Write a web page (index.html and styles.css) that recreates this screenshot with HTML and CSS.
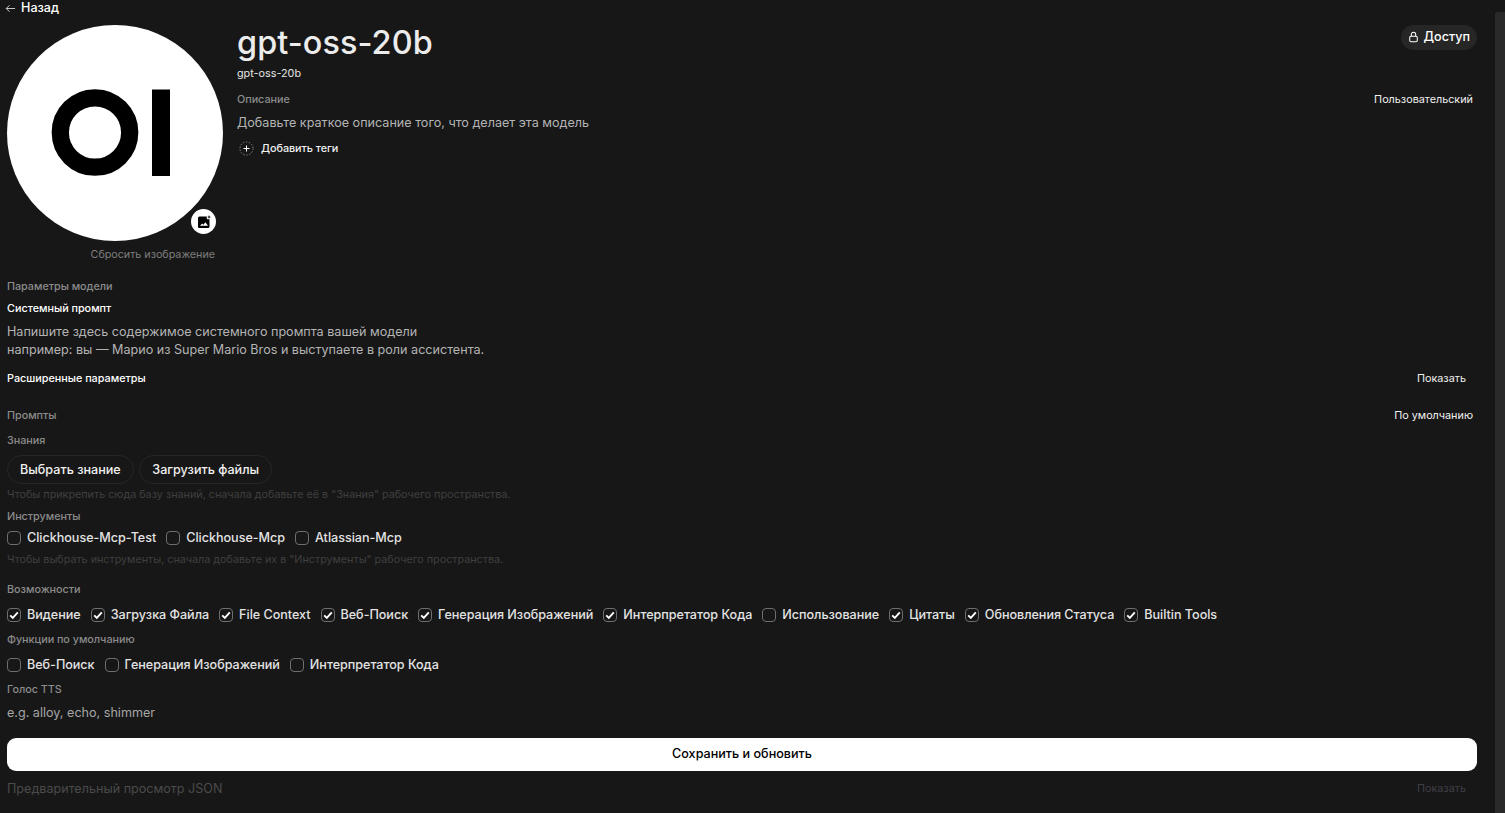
FILE: index.html
```html
<!DOCTYPE html>
<html lang="ru">
<head>
<meta charset="utf-8">
<title>gpt-oss-20b</title>
<link rel="stylesheet" href="styles.css">
</head>
<body>
<div class="scrollbar"></div>
<main class="page">
  <button class="back"><svg class="back-icon" viewBox="0 0 20 20" fill="none" stroke="currentColor" stroke-width="1.5"><path d="M17 10H3.5M8.5 5l-5 5 5 5"/></svg>Назад</button>
  <div class="top">
    <div class="avatar-col">
      <div class="avatar">
        <svg class="logo" viewBox="0 0 216 216"><circle cx="108" cy="108" r="108" fill="#fff"/><circle cx="88" cy="107.5" r="34.7" fill="none" stroke="#000" stroke-width="17.3"/><rect x="145" y="64.5" width="18" height="86.5" fill="#000"/></svg>
        <span class="avatar-edit"><svg viewBox="0 0 16 16" class="avatar-edit-icon"><path fill-rule="evenodd" d="M3.5 2.5h7.2v1.6a1.2 1.2 0 0 0 1.2 1.2h1.6v7.2a1.5 1.5 0 0 1-1.5 1.5h-8.5A1.5 1.5 0 0 1 2 12V4a1.5 1.5 0 0 1 1.5-1.5zM4 11.8h8l-2.6-3.6-2 2.5-1.3-1.3z" fill="#000"/><path d="M13 1l.5 1.5L15 3l-1.5.5L13 5l-.5-1.5L11 3l1.5-.5z" fill="#000"/></svg></span>
      </div>
      <div class="reset">Сбросить изображение</div>
    </div>
    <div class="main-col">
      <div class="title-row">
        <div>
          <h1 class="title">gpt-oss-20b</h1>
          <div class="model-id">gpt-oss-20b</div>
        </div>
        <button class="access"><svg class="lock" viewBox="0 0 16 16" fill="none" stroke="currentColor" stroke-width="1.5"><rect x="2.5" y="7" width="11" height="8" rx="1.8"/><path d="M4.8 7V4.4a3.2 3.2 0 0 1 6.4 0V7"/></svg>Доступ</button>
      </div>
      <div class="row desc-row"><span class="label">Описание</span><span class="side">Пользовательский</span></div>
      <div class="desc">Добавьте краткое описание того, что делает эта модель</div>
      <div class="tags"><svg class="tag-icon" viewBox="0 0 16 16" fill="none" stroke="#fff"><circle cx="8" cy="8" r="7" stroke="#888" stroke-dasharray="1.6 1.6"/><path d="M8 4.8v6.4M4.8 8h6.4" stroke-width="1.1"/></svg>Добавить теги</div>
    </div>
  </div>

  <div class="label params">Параметры модели</div>
  <div class="strong sys-title">Системный промпт</div>
  <div class="sys-text">Напишите здесь содержимое системного промпта вашей модели<br>например: вы — Марио из Super Mario Bros и выступаете в роли ассистента.</div>
  <div class="row adv-row"><span class="strong">Расширенные параметры</span><span class="show">Показать</span></div>
  <div class="row prompts-row"><span class="label">Промпты</span><span class="side">По умолчанию</span></div>

  <div class="label knowledge">Знания</div>
  <div class="btns"><button class="pill">Выбрать знание</button><button class="pill">Загрузить файлы</button></div>
  <div class="hint">Чтобы прикрепить сюда базу знаний, сначала добавьте её в "Знания" рабочего пространства.</div>

  <div class="label tools">Инструменты</div>
  <div class="checks">
    <label class="check"><span class="box"></span>Clickhouse-Mcp-Test</label>
    <label class="check"><span class="box"></span>Clickhouse-Mcp</label>
    <label class="check"><span class="box"></span>Atlassian-Mcp</label>
  </div>
  <div class="hint hint-tools">Чтобы выбрать инструменты, сначала добавьте их в "Инструменты" рабочего пространства.</div>

  <div class="label caps">Возможности</div>
  <div class="checks">
    <label class="check"><span class="box"><svg viewBox="0 0 14 14"><path d="M3.2 7.3l2.6 2.6 5-5.6"/></svg></span>Видение</label>
    <label class="check"><span class="box"><svg viewBox="0 0 14 14"><path d="M3.2 7.3l2.6 2.6 5-5.6"/></svg></span>Загрузка Файла</label>
    <label class="check"><span class="box"><svg viewBox="0 0 14 14"><path d="M3.2 7.3l2.6 2.6 5-5.6"/></svg></span>File Context</label>
    <label class="check"><span class="box"><svg viewBox="0 0 14 14"><path d="M3.2 7.3l2.6 2.6 5-5.6"/></svg></span>Веб-Поиск</label>
    <label class="check"><span class="box"><svg viewBox="0 0 14 14"><path d="M3.2 7.3l2.6 2.6 5-5.6"/></svg></span>Генерация Изображений</label>
    <label class="check"><span class="box"><svg viewBox="0 0 14 14"><path d="M3.2 7.3l2.6 2.6 5-5.6"/></svg></span>Интерпретатор Кода</label>
    <label class="check"><span class="box"></span>Использование</label>
    <label class="check"><span class="box"><svg viewBox="0 0 14 14"><path d="M3.2 7.3l2.6 2.6 5-5.6"/></svg></span>Цитаты</label>
    <label class="check"><span class="box"><svg viewBox="0 0 14 14"><path d="M3.2 7.3l2.6 2.6 5-5.6"/></svg></span>Обновления Статуса</label>
    <label class="check"><span class="box"><svg viewBox="0 0 14 14"><path d="M3.2 7.3l2.6 2.6 5-5.6"/></svg></span>Builtin Tools</label>
  </div>

  <div class="label defaults">Функции по умолчанию</div>
  <div class="checks checks-defaults">
    <label class="check"><span class="box"></span>Веб-Поиск</label>
    <label class="check"><span class="box"></span>Генерация Изображений</label>
    <label class="check"><span class="box"></span>Интерпретатор Кода</label>
  </div>

  <div class="label tts">Голос TTS</div>
  <div class="tts-input">e.g. alloy, echo, shimmer</div>

  <button class="save">Сохранить и обновить</button>
  <div class="row json-row"><span class="json">Предварительный просмотр JSON</span><span class="show show-dim">Показать</span></div>
</main>
</body>
</html>
```

FILE: styles.css
```css
* { box-sizing: border-box; }
html, body { margin: 0; height: 100%; overflow: hidden; }
body {
  background: #171717;
  color: #fff;
  font-family: Inter, "Liberation Sans", sans-serif;
  font-size: 12.6px;
  position: relative;
}
button { font: inherit; color: inherit; background: none; border: 0; padding: 0; }
.scrollbar {
  position: absolute; top: 12px; right: 0; bottom: 0; width: 10px;
  background: #2a2a2a; border-radius: 3px 0 0 0;
}
.page { width: 1470px; margin-left: 7px; }
.back {
  display: flex; align-items: center; gap: 4px; height: 14px; padding-top: 2px; margin-left: -3px;
  font-size: 12.6px; line-height: 12px; font-weight: 500; color: #fff;
}
.back-icon { width: 13px; height: 13px; color: #ccc; }
.top { display: flex; gap: 14px; margin-top: 11px; }
.avatar-col { width: 216px; flex: none; }
.avatar { position: relative; width: 216px; height: 216px; }
.logo { display: block; width: 216px; height: 216px; }
.avatar-edit {
  position: absolute; right: 7px; bottom: 7px;
  width: 25px; height: 25px; border-radius: 50%; background: #fff;
  display: flex; align-items: center; justify-content: center;
}
.avatar-edit-icon { width: 16px; height: 16px; }
.reset { text-align: right; padding-right: 8px; margin-top: 7px; font-size: 10.8px; line-height: 14px; letter-spacing: -0.05px; color: #7d7d7d; }
.main-col { flex: 1; min-width: 0; }
.title-row { display: flex; justify-content: space-between; align-items: flex-start; }
.title { margin: 0; font-size: 32.4px; line-height: 36px; font-weight: 500; letter-spacing: 0.08px; color: #ececec; }
.model-id { margin-top: 6px; font-size: 10.8px; line-height: 14px; color: #e5e5e5; }
.access {
  display: flex; align-items: center; gap: 5px; height: 25px; padding: 0 7px 1px 7px;
  border-radius: 13px; background: #262626; font-size: 12.6px; line-height: 18px; font-weight: 500; color: #fff;
}
.lock { width: 11px; height: 12px; }
.row { display: flex; justify-content: space-between; align-items: center; }
.label { font-size: 10.8px; line-height: 14px; letter-spacing: -0.03px; color: #8b8b8b; font-weight: 500; }
.side { font-size: 10.8px; line-height: 14px; color: #f0f0f0; padding-right: 4px; font-weight: 400; }
.desc-row { margin-top: 12px; }
.desc { margin-top: 7px; font-size: 12.6px; line-height: 18px; color: #b4b4b4; }
.tags { display: flex; align-items: center; gap: 7px; margin-top: 9px; margin-left: 2px; font-size: 10.8px; line-height: 16px; font-weight: 500; letter-spacing: -0.04px; color: #f0f0f0; }
.tag-icon { width: 15px; height: 15px; margin-top: -2px; }
.params { margin-top: 18px; }
.strong { font-size: 10.8px; line-height: 14px; font-weight: 500; color: #fff; }
.sys-title { margin-top: 8px; }
.sys-text { margin-top: 7px; font-size: 12.6px; line-height: 18px; color: #b4b4b4; }
.adv-row { margin-top: 13px; }
.show { font-size: 10.8px; line-height: 14px; font-weight: 400; color: #f0f0f0; padding-right: 11px; }
.prompts-row { margin-top: 23px; }
.knowledge { margin-top: 11px; }
.btns { display: flex; gap: 5.5px; margin-top: 7px; }
.pill {
  height: 29px; padding: 0 12px; border-radius: 15px; border: 1px solid #262626;
  font-size: 12.6px; font-weight: 500; color: #f0f0f0;
}
.hint { margin-top: 4px; font-size: 10.8px; line-height: 14px; letter-spacing: -0.02px; color: #3f3f3f; }
.tools { margin-top: 8px; }
.checks { display: flex; gap: 10px; margin-top: 5px; }
.check { display: flex; align-items: center; gap: 6px; height: 18px; font-size: 12.6px; line-height: 18px; font-weight: 500; letter-spacing: -0.03px; color: #e3e3e3; }
.box {
  width: 14px; height: 14px; flex: none; border: 1px solid #6e6e6e; border-radius: 4px;
  display: flex; align-items: center; justify-content: center;
}
.box svg { width: 14px; height: 14px; flex: none; fill: none; stroke: #fff; stroke-width: 1.9; }
.hint-tools { margin-top: 6px; }
.caps { margin-top: 16px; }
.caps + .checks { margin-top: 9px; }
.defaults { margin-top: 9px; }
.checks-defaults { margin-top: 9px; }
.tts { margin-top: 9px; }
.tts-input { margin-top: 7px; font-size: 12.6px; line-height: 18px; color: #a5a5a5; }
.save {
  display: block; width: 100%; height: 33px; margin-top: 16px; padding-bottom: 2px; border-radius: 9px;
  background: #fff; color: #000; font-size: 12.6px; line-height: 18px; font-weight: 500; text-align: center;
}
.json-row { margin-top: 9px; }
.json { font-size: 12.6px; line-height: 18px; color: #4a4a4a; }
.show-dim { color: #3f3f46; }
```
